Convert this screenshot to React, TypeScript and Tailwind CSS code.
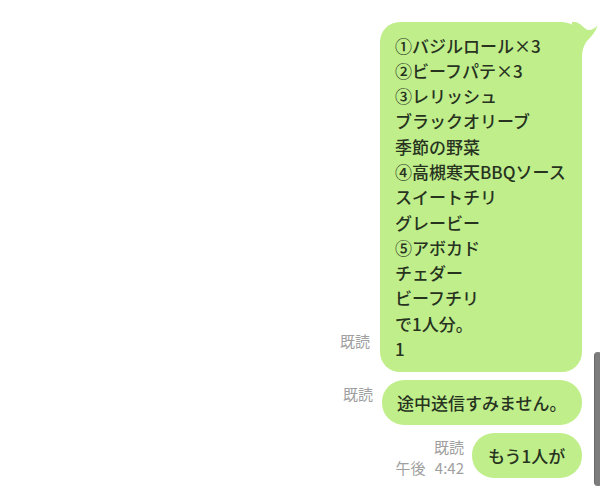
import React from "react";

const font = {
  fontFamily: '"Noto Sans CJK JP", "Noto Sans", sans-serif',
};

const lines = [
  "①バジルロール×3",
  "②ビーフパテ×3",
  "③レリッシュ",
  "ブラックオリーブ",
  "季節の野菜",
  "④高槻寒天BBQソース",
  "スイートチリ",
  "グレービー",
  "⑤アボカド",
  "チェダー",
  "ビーフチリ",
  "で1人分。",
  "1",
];

function Meta({ time }: { time?: string }) {
  return (
    <div className="flex flex-col items-end text-[15px] leading-[21px] text-[#9f9f9f]">
      <span>既読</span>
      <span className={time ? "[word-spacing:6px]" : "invisible"}>{time ?? "午後 4:42"}</span>
    </div>
  );
}

function Tail() {
  return (
    <svg
      className="absolute right-[-16px] top-0"
      width="26"
      height="40"
      viewBox="0 0 26 40"
    >
      <path
        d="M0 0 H2 C9 0 12 8 17 8 C20 8 23 6 25.5 3.5 C24 9 20 14 15 19 C12 23 10 28 10 36 V40 H0 Z"
        fill="#c0ee8b"
      />
    </svg>
  );
}

export default function App() {
  return (
    <div className="relative h-[487px] w-[600px] overflow-hidden bg-white text-[#27331f]" style={font}>
      <div className="flex flex-col items-end gap-[8px] pr-[18px] pt-[22px]">
        <div className="flex items-end gap-[10px]">
          <Meta />
          <div className="relative w-[202px] rounded-[20px] bg-[#c0ee8b] px-[15px] py-[10.5px] text-[17px] leading-[25.3px] font-medium">
            <Tail />
            {lines.map((l, i) => (
              <div key={i} className="relative whitespace-nowrap">
                {l}
              </div>
            ))}
          </div>
        </div>

        <div className="flex items-end gap-[9px]">
          <Meta />
          <div className="w-[200px] rounded-[22px] bg-[#c0ee8b] px-[15px] py-[10px] text-[17px] leading-[25px] font-medium whitespace-nowrap">
            途中送信すみません。
          </div>
        </div>

        <div className="flex items-end gap-[8px]">
          <Meta time="午後 4:42" />
          <div className="w-[110px] rounded-[22px] bg-[#c0ee8b] px-[16px] py-[10px] text-[17px] leading-[25px] font-medium whitespace-nowrap">
            もう1人が
          </div>
        </div>
      </div>

      <div className="absolute left-[594px] top-[352px] h-[134px] w-[8px] rounded-[4px] border-l border-[#6a6a6a] bg-[#7d7d7d]" />
    </div>
  );
}
